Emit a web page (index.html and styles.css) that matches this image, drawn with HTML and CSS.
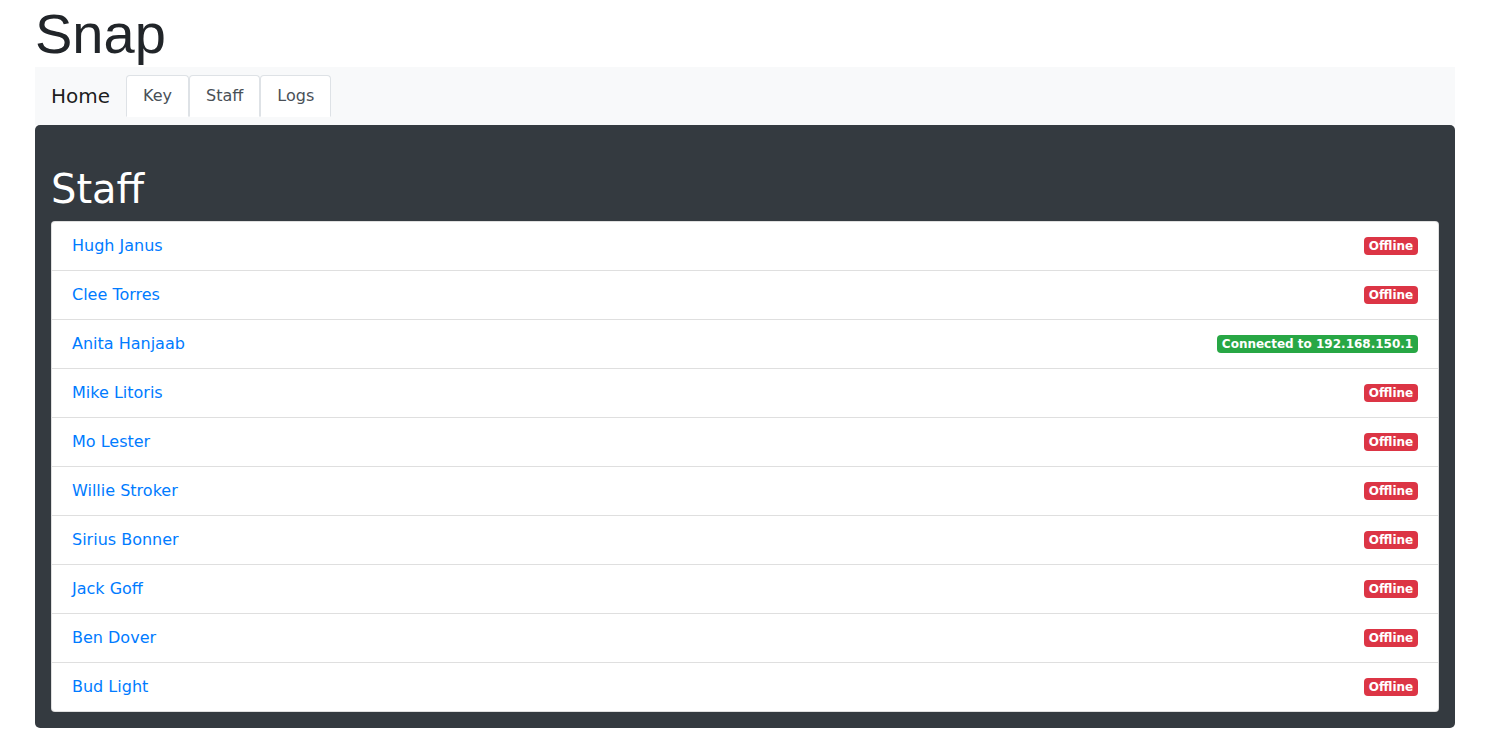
FILE: index.html
```html
<!DOCTYPE html>
<html lang="en">
<head>
<meta charset="utf-8">
<title>Snap</title>
<link rel="stylesheet" href="styles.css">
</head>
<body>
<div class="container">
  <h1 class="title">Snap</h1>
  <nav class="navbar">
    <a class="brand" href="#">Home</a>
    <ul class="tabs">
      <li><a class="tab" href="#">Key</a></li>
      <li><a class="tab" href="#">Staff</a></li>
      <li><a class="tab" href="#">Logs</a></li>
    </ul>
  </nav>
  <section class="panel">
    <h2 class="panel-title">Staff</h2>
    <ul class="list">
      <li class="item"><a href="#">Hugh Janus</a><span class="badge off">Offline</span></li>
      <li class="item"><a href="#">Clee Torres</a><span class="badge off">Offline</span></li>
      <li class="item"><a href="#">Anita Hanjaab</a><span class="badge on">Connected to 192.168.150.1</span></li>
      <li class="item"><a href="#">Mike Litoris</a><span class="badge off">Offline</span></li>
      <li class="item"><a href="#">Mo Lester</a><span class="badge off">Offline</span></li>
      <li class="item"><a href="#">Willie Stroker</a><span class="badge off">Offline</span></li>
      <li class="item"><a href="#">Sirius Bonner</a><span class="badge off">Offline</span></li>
      <li class="item"><a href="#">Jack Goff</a><span class="badge off">Offline</span></li>
      <li class="item"><a href="#">Ben Dover</a><span class="badge off">Offline</span></li>
      <li class="item"><a href="#">Bud Light</a><span class="badge off">Offline</span></li>
    </ul>
  </section>
</div>
</body>
</html>
```

FILE: styles.css
```css
* { box-sizing: border-box; }
html, body { margin: 0; padding: 0; }
body {
  font-family: "DejaVu Sans", sans-serif;
  font-size: 16px;
  line-height: 1.5;
  color: #212529;
  background: #fff;
}
a { text-decoration: none; }
.container {
  width: 1420px;
  margin-left: 35px;
}
.title {
  margin: 0;
  font-family: "Liberation Sans", Arial, sans-serif;
  font-size: 56px;
  font-weight: 400;
  line-height: 1.2;
  color: #212529;
}
.navbar {
  display: flex;
  align-items: flex-end;
  background: #f8f9fa;
  padding: 8px 16px;
}
.brand {
  font-size: 20px;
  line-height: 30px;
  padding: 5px 0;
  margin-right: 16px;
  color: rgba(0,0,0,.9);
  align-self: center;
}
.tabs {
  display: flex;
  list-style: none;
  margin: 0;
  padding: 0;
}
.tab {
  display: block;
  padding: 8px 16px;
  border: 1px solid #dee2e6;
  border-bottom-color: transparent;
  border-radius: 4px 4px 0 0;
  background: #fff;
  color: #495057;
  line-height: 24px;
}
.panel {
  background: #343a40;
  border-radius: 5px;
  padding: 40px 16px 16px;
}
.panel-title {
  margin: 0 0 8px;
  font-size: 40px;
  font-weight: 400;
  line-height: 1.2;
  color: #fff;
}
.list {
  list-style: none;
  margin: 0;
  padding: 0;
  background: #fff;
  border: 1px solid rgba(0,0,0,.125);
  border-radius: 4px;
}
.item {
  display: flex;
  justify-content: space-between;
  align-items: center;
  padding: 12px 20px;
  border-top: 1px solid rgba(0,0,0,.125);
  line-height: 24px;
}
.item:first-child { border-top: 0; }
.item a { color: #007bff; }
.badge {
  display: inline-block;
  font-size: 12px;
  font-weight: 700;
  line-height: 1;
  padding: 3px 4.8px;
  border-radius: 4px;
  color: #fff;
  white-space: nowrap;
}
.off { background: #dc3545; }
.on { background: #28a745; }
```
